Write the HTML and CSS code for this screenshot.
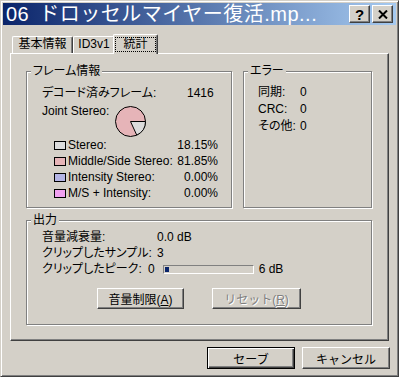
FILE: index.html
```html
<!DOCTYPE html>
<html lang="ja">
<head>
  <meta charset="UTF-8" />
  <title>06 ドロッセルマイヤー復活.mp3 - 統計</title>
  <link rel="stylesheet" href="styles.css">
</head>
<body>
<div class="window">
  <div class="titlebar">
    <span class="title">06 ドロッセルマイヤー復活.mp...</span>
    <div class="caption-buttons">
      <button class="caption-btn help">?</button>
      <button class="caption-btn close">
        <svg width="10" height="9" viewBox="0 0 10 9"><path d="M1 0.5 L9 8.5 M9 0.5 L1 8.5" stroke="#000" stroke-width="2"/></svg>
      </button>
    </div>
  </div>

  <div class="tabs">
    <div class="tab tab-basic">基本情報</div>
    <div class="tab tab-id3">ID3v1</div>
    <div class="tab tab-stats active"><span class="focus">統計</span></div>
  </div>

  <div class="panel">
    <div class="top-groups">
      <div class="group frames">
        <span class="group-label">フレーム情報</span>
        <div class="row">
          <span class="label decoded">デコード済みフレーム:</span>
          <span>1416</span>
        </div>
        <div class="row joint">
          <span class="label">Joint Stereo:</span>
          <svg class="pie" width="31" height="31" viewBox="0 0 31 31">
            <circle cx="15.5" cy="15.5" r="15" fill="#e6b4b8" stroke="#000" stroke-width="1"/>
            <path d="M15.5 15.5 L30.5 15.5 A15 15 0 0 1 21.76 29.13 Z" fill="#dcdcdc" stroke="#000" stroke-width="1"/>
          </svg>
        </div>
        <ul class="legend">
          <li><i class="swatch swatch-stereo"></i>Stereo:<span class="pct">18.15%</span></li>
          <li><i class="swatch swatch-ms"></i>Middle/Side Stereo:<span class="pct">81.85%</span></li>
          <li><i class="swatch swatch-intensity"></i>Intensity Stereo:<span class="pct">0.00%</span></li>
          <li><i class="swatch swatch-msi"></i>M/S + Intensity:<span class="pct">0.00%</span></li>
        </ul>
      </div>

      <div class="group errors">
        <span class="group-label">エラー</span>
        <div class="row"><span class="label">同期:</span><span>0</span></div>
        <div class="row"><span class="label">CRC:</span><span>0</span></div>
        <div class="row"><span class="label">その他:</span><span>0</span></div>
      </div>
    </div>

    <div class="group output">
      <span class="group-label">出力</span>
      <div class="row"><span class="label">音量減衰量:</span><span>0.0 dB</span></div>
      <div class="row"><span class="label">クリップしたサンプル:</span><span>3</span></div>
      <div class="row">
        <span class="label peak">クリップしたピーク:</span>
        <span>0</span>
        <div class="meter"><div class="meter-fill"></div></div>
        <span class="meter-max">6 dB</span>
      </div>
      <div class="output-buttons">
        <button class="btn btn-limit">音量制限(<u>A</u>)</button>
        <button class="btn btn-reset" disabled>リセット(<u>R</u>)</button>
      </div>
    </div>
  </div>

  <div class="footer">
    <button class="btn default">セーブ</button>
    <button class="btn">キャンセル</button>
  </div>
</div>
</body>
</html>
```

FILE: styles.css
```css
body {
  margin: 0;
  background: #d4d0c8;
  font-family: "Liberation Sans", "Noto Sans CJK JP", sans-serif;
  font-size: 12px;
  font-feature-settings: "palt";
  color: #000;
}

.window {
  width: 399px;
  height: 377px;
  box-sizing: border-box;
  padding: 2px;
  background: #d4d0c8;
  border: 1px solid;
  border-color: #d4d0c8 #404040 #404040 #d4d0c8;
  box-shadow: inset 1px 1px #fff, inset -1px -1px #808080;
}

/* title bar */
.titlebar {
  height: 22px;
  display: flex;
  align-items: center;
  padding: 0 3px;
  background: linear-gradient(to right, #0a246a, #a6caf0);
}

.title {
  flex: 1;
  overflow: hidden;
  white-space: nowrap;
  color: #fff;
  font-size: 20px;
  line-height: 22px;
  letter-spacing: 0.5px;
  word-spacing: 4px;
  font-feature-settings: normal;
}

.caption-buttons {
  display: flex;
  gap: 2px;
}

.caption-btn {
  width: 21px;
  height: 18px;
  padding: 0;
  display: flex;
  align-items: center;
  justify-content: center;
  background: #d4d0c8;
  border: 1px solid;
  border-color: #fff #404040 #404040 #fff;
  box-shadow: inset -1px -1px #808080;
  font-family: "Liberation Sans", sans-serif;
  font-weight: bold;
  font-size: 15px;
  line-height: 1;
}

/* tabs */
.tabs {
  display: flex;
  align-items: flex-end;
  height: 19px;
  margin: 9px 0 0 7px;
  padding-left: 2px;
}

.tab {
  height: 17px;
  box-sizing: border-box;
  text-align: center;
  line-height: 15px;
  border-top: 1px solid #fff;
  border-left: 1px solid #fff;
  border-right: 1px solid #404040;
  border-radius: 2px 2px 0 0;
  box-shadow: inset -1px 0 #808080;
}

.tab-basic { width: 61px; }
.tab-id3 { width: 42px; }
.tab-stats { width: 41px; }

.tab.active {
  position: relative;
  z-index: 1;
  height: 20px;
  width: 45px;
  margin: 0 -2px -1px -2px;
  padding-top: 2px;
  background: #d4d0c8;
  line-height: 13px;
}

.focus {
  display: inline-block;
  padding: 0 7px;
  border: 1px dotted #000;
}

/* tab panel */
.panel {
  width: 379px;
  height: 288px;
  margin-left: 7px;
  box-sizing: border-box;
  padding: 17px 15px 0 15px;
  border: 1px solid;
  border-color: #fff #404040 #404040 #fff;
  box-shadow: inset -1px -1px #808080;
}

.top-groups {
  display: flex;
  gap: 11px;
}

.group {
  position: relative;
  box-sizing: border-box;
  border: 1px solid #808080;
  box-shadow: inset 1px 1px #fff, 1px 1px #fff;
}

.group-label {
  position: absolute;
  top: -8px;
  left: 4px;
  padding: 0 2px;
  line-height: 14px;
  background: #d4d0c8;
}

.row {
  display: flex;
  align-items: center;
  line-height: 16px;
}

.frames {
  width: 206px;
  height: 137px;
  padding: 13px 13px 0 15px;
}

.frames .decoded { width: 145px; }

.joint {
  align-items: flex-start;
  margin-top: 2px;
}

.joint .label { width: 73px; }

.pie {
  display: block;
  margin-top: 3px;
}

.legend {
  list-style: none;
  margin: 0;
  padding: 0 0 0 12px;
}

.legend li {
  display: flex;
  align-items: center;
  height: 16px;
}

.swatch {
  width: 12px;
  height: 9px;
  box-sizing: border-box;
  border: 1px solid #000;
  margin-right: 2px;
}

.swatch-stereo { background: #dcdcdc; }
.swatch-ms { background: #e6b4b8; }
.swatch-intensity { background: #b4b4e6; }
.swatch-msi { background: #f0a0f0; }

.pct { margin-left: auto; }

.errors {
  width: 129px;
  height: 137px;
  padding: 12px 0 0 14px;
}

.errors .row { line-height: 17px; }
.errors .label { width: 42px; }

.output {
  width: 346px;
  height: 105px;
  margin-top: 12px;
  padding: 8px 0 0 15px;
}

.output .label { width: 115px; }
.output .label.peak { width: 106px; }

.meter {
  width: 91px;
  height: 9px;
  margin-left: 8px;
  box-sizing: border-box;
  padding: 1px;
  border: 1px solid;
  border-color: #808080 #fff #fff #808080;
}

.meter-fill {
  width: 4px;
  height: 5px;
  background: #0a246a;
}

.meter-max { margin-left: 5px; }

.output-buttons {
  display: flex;
  gap: 28px;
  margin: 11px 0 0 55px;
}

/* buttons */
.btn {
  height: 21px;
  padding: 0;
  font-family: inherit;
  font-size: 12px;
  color: #000;
  background: #d4d0c8;
  border: 1px solid;
  border-color: #fff #404040 #404040 #fff;
  box-shadow: inset -1px -1px #808080;
}

.btn-limit { width: 87px; }
.btn-reset { width: 89px; }

.btn:disabled {
  color: #808080;
  text-shadow: 1px 1px #fff;
}

.footer {
  display: flex;
  justify-content: flex-end;
  gap: 7px;
  margin-top: 6px;
  padding-right: 6px;
}

.footer .btn {
  width: 88px;
  height: 22px;
}

.btn.default {
  border-color: #000;
  box-shadow: inset 1px 1px #fff, inset -1px -1px #404040, inset -2px -2px #808080;
}
```
